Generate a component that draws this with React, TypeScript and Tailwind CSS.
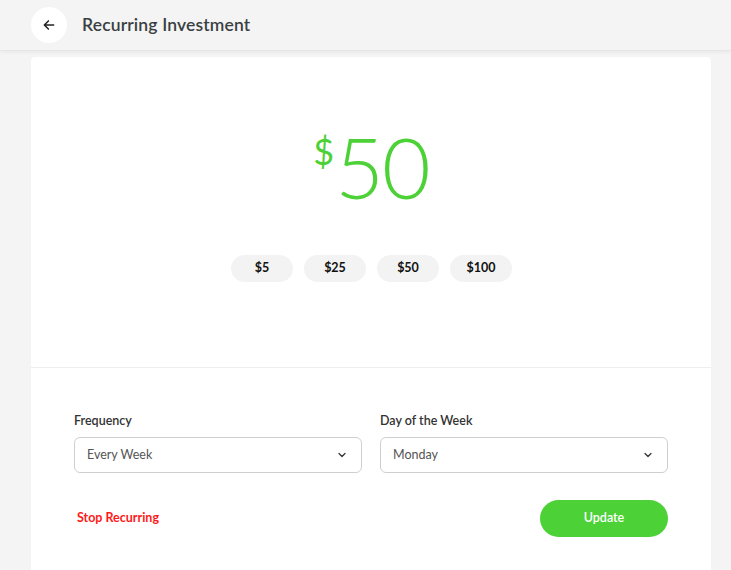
import React from "react";

function Chevron() {
  return (
    <svg width="12" height="12" viewBox="0 0 24 24" fill="none" stroke="#333" strokeWidth="2.5" strokeLinecap="round" strokeLinejoin="round">
      <path d="M6 9l6 6 6-6" />
    </svg>
  );
}

function Select({ label, value }: { label: string; value: string }) {
  return (
    <div className="flex flex-col flex-1">
      <div className="text-[12.5px] font-semibold text-[#333] mb-[8px] leading-[16px]">{label}</div>
      <div className="h-[36px] border border-[#cfcfcf] rounded-[6px] flex items-center justify-between pl-[12px] pr-[13px] bg-white">
        <span className="text-[12.5px] text-[#555]">{value}</span>
        <Chevron />
      </div>
    </div>
  );
}

export default function App() {
  return (
    <div className="min-h-[570px] bg-[#f4f4f4] overflow-hidden" style={{ fontFamily: "Lato, 'Noto Sans', sans-serif" }}>
      <div className="h-[51px] flex items-center pl-[31px] border-b border-[#e6e6e6] shadow-[0_1px_4px_rgba(0,0,0,0.06)] bg-[#f4f4f4]">
        <div className="w-[36px] h-[36px] rounded-full bg-white flex items-center justify-center">
          <svg width="14" height="14" viewBox="0 0 24 24" fill="none" stroke="#222" strokeWidth="2.6" strokeLinecap="round" strokeLinejoin="round">
            <path d="M20 12H4M11 5l-7 7 7 7" />
          </svg>
        </div>
        <div className="ml-[15px] mt-[1px] text-[17.5px] font-semibold text-[#3a3f42] tracking-[0.15px]">Recurring Investment</div>
      </div>
      <div className="ml-[31px] mr-[20px] mt-[6px] bg-white rounded-t-[4px] h-[520px]">
        <div className="h-[311px] flex flex-col items-center border-b border-[#eeeeee]">
          <div className="mt-[68px] flex items-start text-[#4cd137]">
            <span className="text-[36px] font-normal leading-none mt-[8px] mr-[1px]">$</span>
            <span className="text-[84px] font-light leading-[84px] tracking-[-2px]">50</span>
          </div>
          <div className="flex gap-[11px] mt-[46px] ml-[1px]">
            {["$5", "$25", "$50", "$100"].map((c) => (
              <div key={c} className="w-[62px] h-[27px] rounded-full bg-[#f3f3f3] flex items-center justify-center text-[12.5px] font-bold text-[#111]">
                {c}
              </div>
            ))}
          </div>
        </div>
        <div className="px-[43px] pt-[45px]">
          <div className="flex gap-[18px]">
            <Select label="Frequency" value="Every Week" />
            <Select label="Day of the Week" value="Monday" />
          </div>
          <div className="flex items-center justify-between mt-[27px]">
            <div className="ml-[3px] text-[12.5px] font-bold text-[#ff1a1a]">Stop Recurring</div>
            <div className="w-[128px] h-[37px] rounded-full bg-[#4cd137] flex items-center justify-center text-white text-[12.5px] font-semibold">
              Update
            </div>
          </div>
        </div>
      </div>
    </div>
  );
}
